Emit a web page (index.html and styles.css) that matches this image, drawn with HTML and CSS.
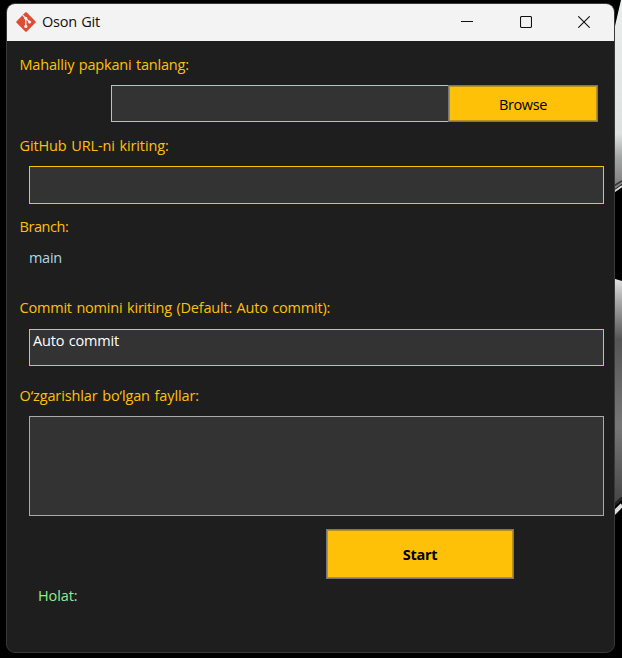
FILE: index.html
```html
<!DOCTYPE html>
<html lang="uz">
<head>
<meta charset="utf-8">
<title>Oson Git</title>
<link rel="stylesheet" href="styles.css">
</head>
<body>
<svg class="wallpaper" viewBox="0 0 622 658" aria-hidden="true">
  <defs>
    <linearGradient id="upper" x1="0" y1="0" x2="0" y2="1">
      <stop offset="0" stop-color="#eceeee"/><stop offset=".7" stop-color="#dde2e0"/><stop offset=".82" stop-color="#a5a7a6"/><stop offset="1" stop-color="#777"/>
    </linearGradient>
    <linearGradient id="lower" x1="0" y1="0" x2="0" y2="1">
      <stop offset="0" stop-color="#e4e4e4"/><stop offset=".1" stop-color="#aaa"/><stop offset=".27" stop-color="#555"/><stop offset=".65" stop-color="#777"/><stop offset="1" stop-color="#444"/>
    </linearGradient>
  </defs>
  <path d="M621 0h1v184l-10 7V39z" fill="url(#upper)"/>
  <path d="M612 187l10-6" stroke="#333" stroke-width="1.5"/>
  <path d="M612 193l10-7" stroke="#ddd" stroke-width="2"/>
  <path d="M612 278l10 3v216l-10 9z" fill="url(#lower)"/>
  <path d="M612 507l10-9" stroke="#222" stroke-width="3"/>
  <path d="M612 515l10-10" stroke="#ddd" stroke-width="4"/>
</svg>
<main class="window">
  <header class="titlebar">
    <svg class="logo" viewBox="0 0 20 20">
      <path d="M9.2.6a1.1 1.1 0 0 1 1.6 0l8.6 8.6a1.1 1.1 0 0 1 0 1.6l-8.6 8.6a1.1 1.1 0 0 1-1.6 0L.6 10.800a1.100 1.100 0 0 1 0-1.600z" fill="#de4c36"/>
      <path d="M6.800 3.200l3 3M9.800 6.200v8.300M9.800 6.200l4 4" fill="none" stroke="#f9eeeb" stroke-width="1.300"/>
      <circle cx="9.800" cy="6.300" r="1.500" fill="#f9eeeb"/><circle cx="9.800" cy="14.400" r="1.600" fill="#f9eeeb"/><circle cx="13.600" cy="10" r="1.600" fill="#f9eeeb"/>
    </svg>
    <h1 class="title">Oson Git</h1>
    <div class="controls">
      <svg class="control" viewBox="0 0 12 12"><path d="M0 5.500h12"/></svg>
      <svg class="control" viewBox="0 0 12 12"><rect x=".5" y=".5" width="11" height="11" rx="1.300"/></svg>
      <svg class="control" viewBox="0 0 12 12"><path d="M.3.300l11.400 11.400M11.700.300L.3 11.700"/></svg>
    </div>
  </header>
  <section class="form">
    <div class="label folder-label"><span>Mahalliy papkani tanlang:</span></div>
    <div class="folder-row"><div class="field folder"></div><button class="button browse"><span>Browse</span></button></div>
    <div class="label url-label"><span>GitHub URL-ni kiriting:</span></div>
    <div class="field url"></div>
    <div class="label branch-label"><span>Branch:</span></div>
    <div class="label branch"><span>main</span></div>
    <div class="label commit-label"><span>Commit nomini kiriting (Default: Auto commit):</span></div>
    <div class="field commit"><span>Auto commit</span></div>
    <div class="label files-label"><span>O‘zgarishlar bo‘lgan fayllar:</span></div>
    <div class="field files"></div>
    <button class="button start"><span>Start</span></button>
    <div class="label status"><span>Holat:</span></div>
  </section>
</main>
</body>
</html>
```
FILE: styles.css
```css
* { box-sizing: border-box; }
body {
  margin: 0;
  height: 658px;
  padding: 3px 7px 5px 6px;
  background: #000;
  font: 14.5px/20px "Open Sans", sans-serif;
  word-spacing: 1px;
  overflow: hidden;
}
.wallpaper { position: absolute; inset: 0; width: 622px; height: 658px; }
.window {
  position: relative;
  height: 650px;
  border: 1px solid #393939;
  border-radius: 9px;
  background: #1e1e1e;
  overflow: hidden;
}
.titlebar {
  display: flex;
  align-items: center;
  height: 37px;
  padding: 0 24px 2px 9px;
  background: #f3f3f3;
  color: #111;
}
.logo { width: 20px; height: 20px; margin-top: 1px; }
.title { margin: 1px 0 0 6px; font-size: 14.5px; font-weight: 400; letter-spacing: -.25px; }
.controls { display: flex; gap: 46.500px; margin: 1px 0 0 auto; }
.control { width: 12px; height: 12px; fill: none; stroke: #111; stroke-width: 1.100; }
.form { display: flex; flex-direction: column; padding: 14px 10px 0 13px; }
.label { flex: none; height: 20px; color: #ffc107; white-space: nowrap; letter-spacing: -.2px; text-indent: -.5px; }
.field { background: #333; border: 1px solid #ffc107; color: #fff; white-space: nowrap; }
.button {
  display: flex;
  align-items: center;
  justify-content: center;
  padding: 2px 0 0;
  border: 1px solid #767676;
  box-shadow: inset 0 0 0 1px #b8902a;
  background: #ffc107;
  color: #000;
  font: inherit;
}
.folder-row { display: flex; height: 37px; margin: 10px 6px 0 91px; }
.folder { flex: 1; border-right: 0; }
.browse { width: 150px; letter-spacing: -.35px; }
.url-label { margin-top: 14px; letter-spacing: -.12px; }
.url { height: 38px; margin: 10px 0 0 9px; }
.branch-label { margin-top: 13px; letter-spacing: -.45px; }
.branch { margin: 11px 0 0 9px; color: #add8e6; letter-spacing: -.3px; text-indent: 0; }
.commit-label { margin-top: 30px; }
.commit { height: 37px; margin: 11px 0 0 9px; padding: 1px 3px; letter-spacing: -.2px; }
.files-label { margin-top: 20px; letter-spacing: -.12px; }
.files { height: 100px; margin: 10px 0 0 9px; border-color: #aaa; }
.start { width: 188px; height: 50px; margin: 13px 0 0 306px; font-weight: 700; letter-spacing: -.3px; }
.status { margin: 7px 0 0 18px; color: #90ee90; letter-spacing: -.1px; text-indent: 0; }
```
